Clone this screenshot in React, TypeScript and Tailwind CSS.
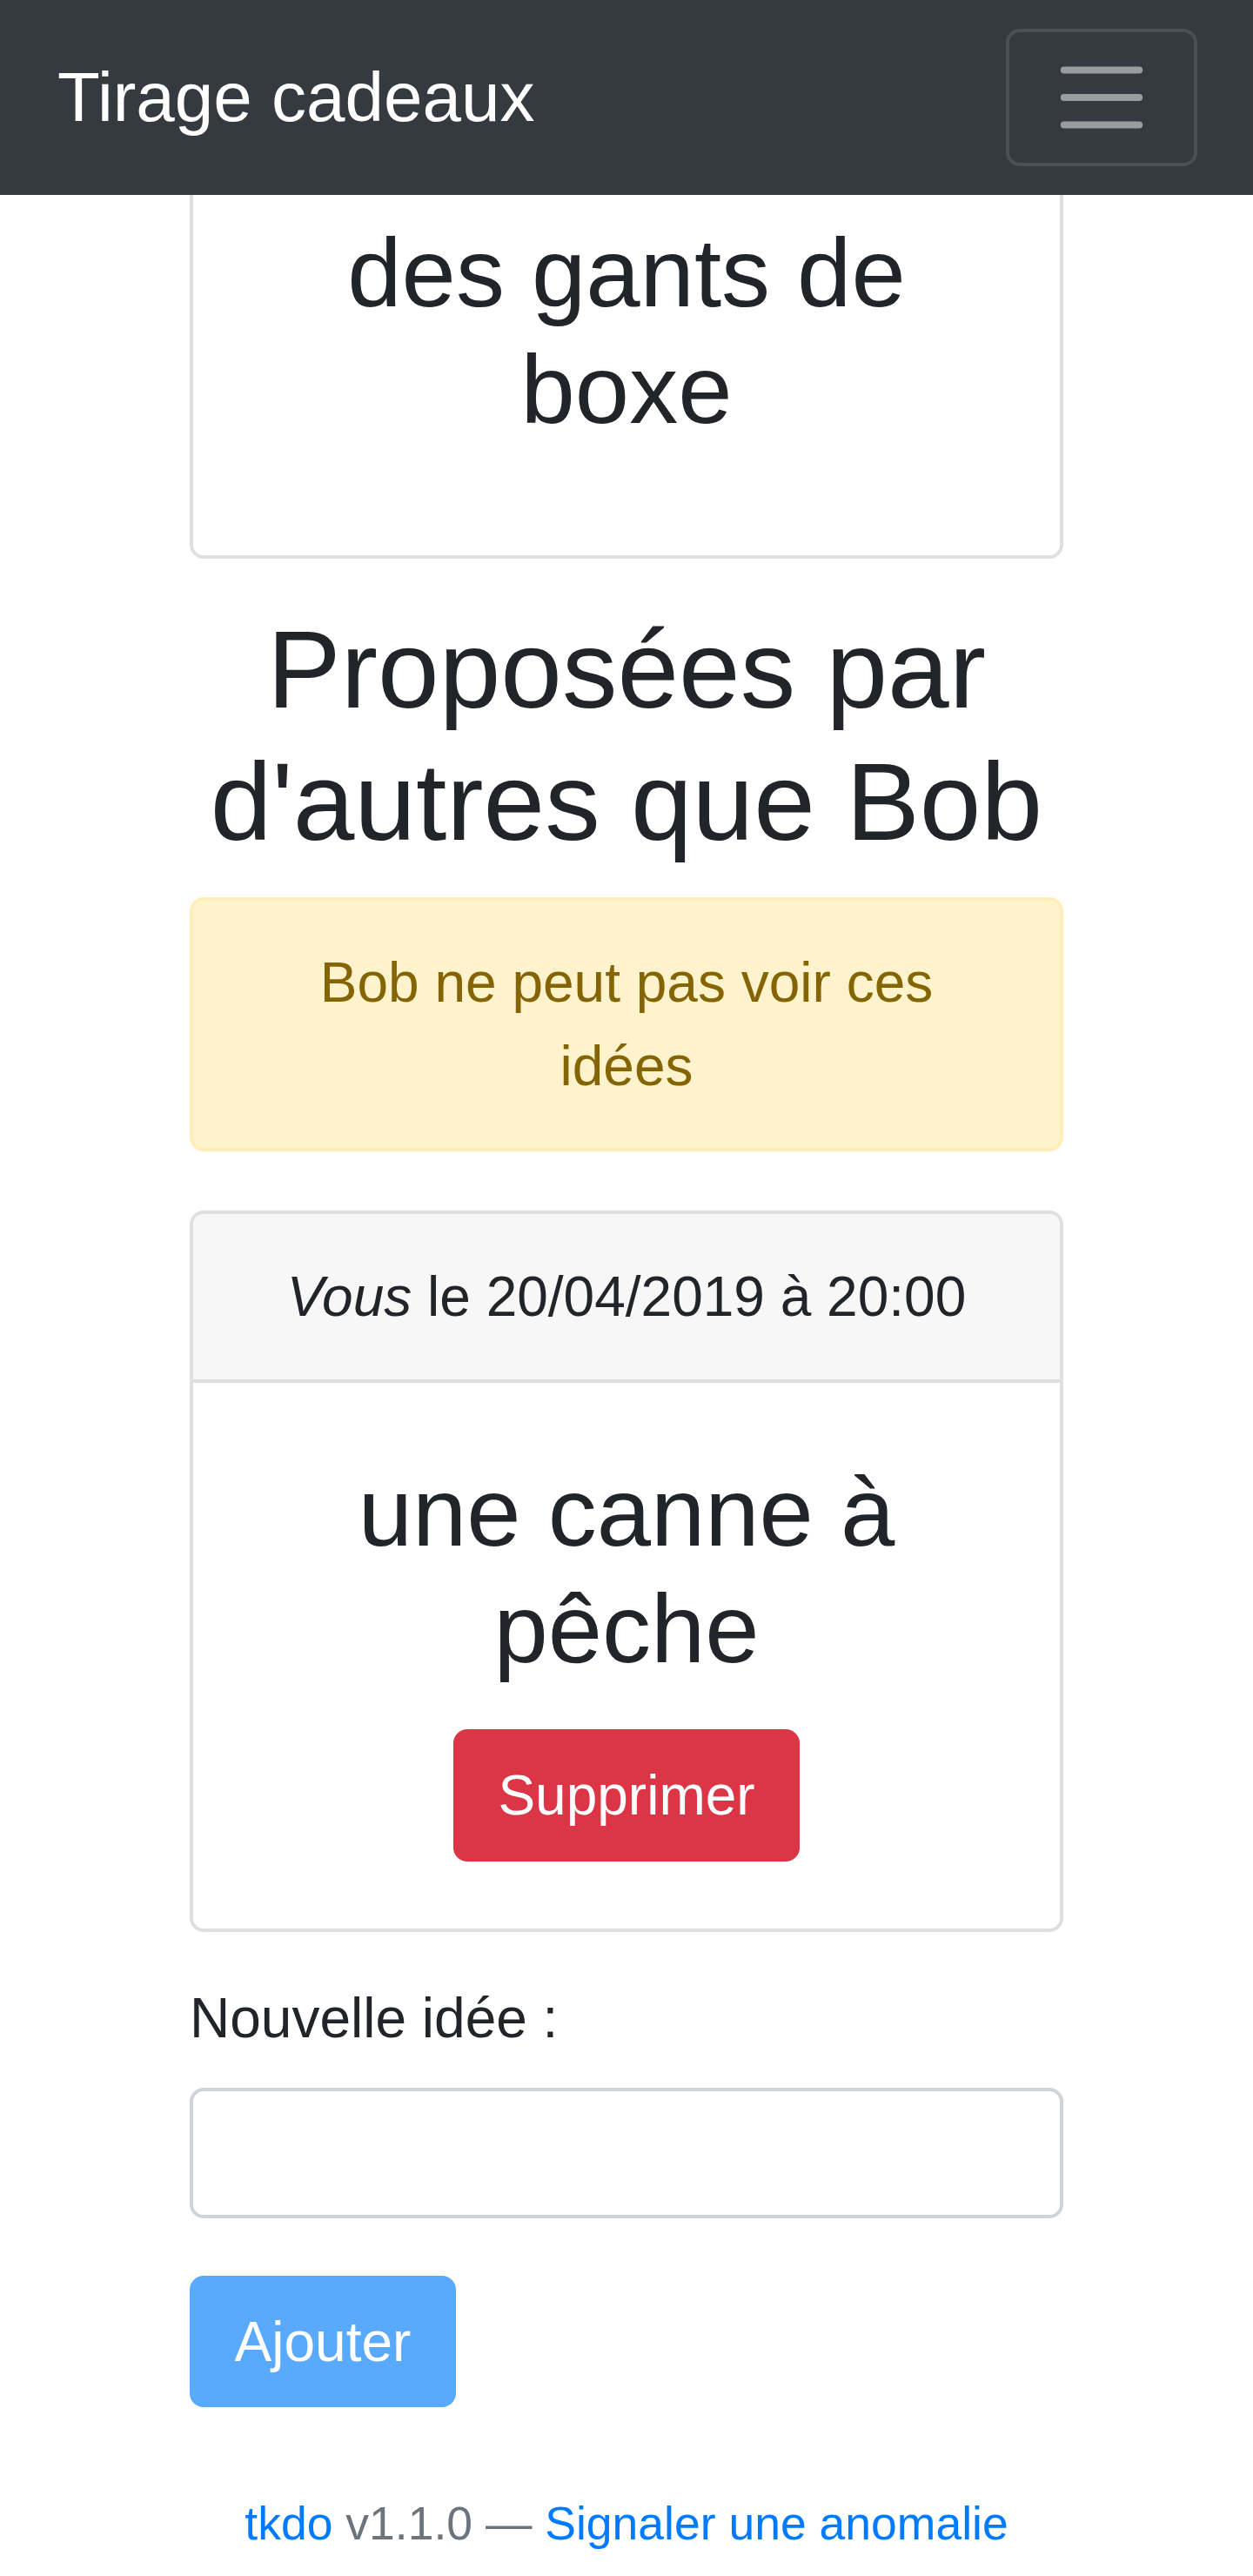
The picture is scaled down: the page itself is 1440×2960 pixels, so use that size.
import React from 'react';

// --- Icons ---
const TogglerIcon = () => (
  <svg width="118" height="118" viewBox="0 0 30 30" aria-hidden="true">
    <path
      d="M4 7h22M4 15h22M4 23h22"
      stroke="rgba(255,255,255,0.5)"
      strokeWidth="2"
      strokeLinecap="round"
      strokeMiterlimit="10"
    />
  </svg>
);
// ---

const App: React.FC = () => {
  return (
    <div className="h-[2960px] overflow-hidden bg-white font-['Liberation_Sans',Arial,sans-serif] text-[#212529]">
      {/* Navbar */}
      <nav className="h-[224px] bg-[#343a40] flex items-center justify-between pl-[66px] pr-[64px]">
        <span className="text-white text-[80px] leading-[120px]">Tirage cadeaux</span>
        <button className="w-[220px] h-[158px] border-4 border-[#4a5055] rounded-[16px] flex items-center justify-center">
          <TogglerIcon />
        </button>
      </nav>

      <div className="w-[1004px] mx-auto">
        {/* Card cut off by the top bar */}
        <div className="border-x-4 border-b-4 border-[#dfdfdf] rounded-b-[16px] px-[56px] pt-[23px] pb-[75px]">
          <h3 className="text-[112px] leading-[134px] text-center mb-[48px]">des gants de boxe</h3>
        </div>

        {/* Section title */}
        <h2 className="mt-[51px] mb-[34px] text-[127px] leading-[152px] text-center">
          Proposées par d'autres que Bob
        </h2>

        {/* Warning */}
        <div className="border-4 border-[#ffeeba] bg-[#fff3cd] text-[#856404] rounded-[16px] px-[79px] py-[46px] text-[64px] leading-[96px] text-center">
          Bob ne peut pas voir ces idées
        </div>

        {/* Idea card */}
        <div className="mt-[68px] border-4 border-[#dfdfdf] rounded-[16px] overflow-hidden">
          <div className="bg-[#f7f7f7] border-b-4 border-[#dfdfdf] px-[79px] py-[47px] text-[64px] leading-[96px] text-center">
            <em>Vous</em> le 20/04/2019 à 20:00
          </div>
          <div className="px-[56px] pt-[82px] pb-[77px] flex flex-col items-center">
            <h3 className="text-[112px] leading-[134px] text-center mb-[48px]">une canne à pêche</h3>
            <button className="h-[152px] px-[51px] bg-[#dc3545] text-white text-[64px] leading-[96px] rounded-[16px]">
              Supprimer
            </button>
          </div>
        </div>

        {/* Form */}
        <div className="mt-[51px]">
          <label className="block text-[64px] leading-[96px] mb-[32px]">Nouvelle idée :</label>
          <input
            type="text"
            className="block w-full h-[150px] border-4 border-[#ced4da] rounded-[16px] px-[47px] text-[64px] outline-none"
          />
          <button
            disabled
            className="mt-[66px] w-[306px] h-[151px] bg-[#59a9ff] text-white text-[64px] leading-[96px] rounded-[16px]"
          >
            Ajouter
          </button>
        </div>
      </div>

      {/* Footer */}
      <footer className="mt-[94px] text-center text-[53.5px] leading-[80px] text-[#6c757d]">
        <a className="text-[#007bff]">tkdo</a> v1.1.0 — <a className="text-[#007bff]">Signaler une anomalie</a>
      </footer>
    </div>
  );
};

export default App;
